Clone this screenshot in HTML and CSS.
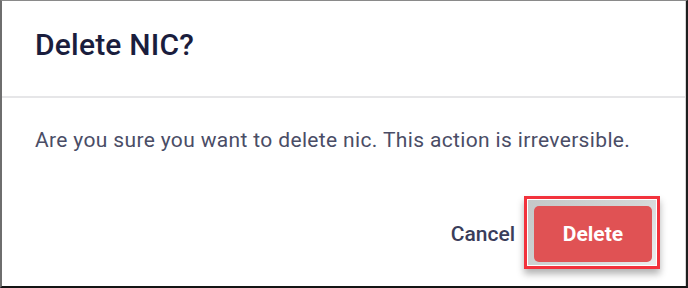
FILE: index.html
```html
<!DOCTYPE html>
<html>
<head>
<meta charset="utf-8">
<link rel="stylesheet" href="styles.css">
</head>
<body>
<div class="frame">
  <div class="dialog">
    <div class="header">
      <h2 class="title">Delete NIC?</h2>
    </div>
    <div class="content">
      <p class="message">Are you sure you want to delete nic. This action is irreversible.</p>
    </div>
    <div class="actions">
      <button class="btn-cancel">Cancel</button>
      <div class="highlight">
        <div class="focus">
          <button class="btn-delete">Delete</button>
        </div>
      </div>
    </div>
  </div>
</div>
</body>
</html>
```
FILE: styles.css
```css
html, body {
  margin: 0;
  padding: 0;
  background: #ffffff;
}
.frame {
  width: 688px;
  height: 288px;
  box-sizing: border-box;
  border-top: 1px solid #8a8a8a;
  border-left: 2px solid #6e6e6e;
  border-right: 2px solid #1e1e1e;
  border-bottom: 2px solid #141414;
  background: #ffffff;
  overflow: hidden;
}
.dialog {
  height: 100%;
  box-sizing: border-box;
  border-right: 1px solid #d6d6d6;
  display: flex;
  flex-direction: column;
  font-family: Roboto, "Liberation Sans", sans-serif;
}
.header {
  height: 97px;
  box-sizing: border-box;
  border-bottom: 2px solid #e6e6e8;
  padding: 27px 0 0 33px;
}
.title {
  margin: 0;
  font-size: 30px;
  line-height: 34px;
  font-weight: 500;
  letter-spacing: 0.2px;
  color: #1a1d3d;
}
.content {
  padding: 30px 0 0 33px;
}
.message {
  margin: 0;
  font-size: 21px;
  line-height: 24px;
  font-weight: 400;
  letter-spacing: 0.35px;
  color: #4a4d66;
}
.actions {
  display: flex;
  justify-content: flex-end;
  align-items: center;
  gap: 9px;
  padding: 44px 25px 0 0;
}
.btn-cancel {
  border: none;
  background: none;
  padding: 0;
  font-family: inherit;
  font-size: 21px;
  font-weight: 500;
  color: #3a3d5a;
  margin-top: 2px;
}
.highlight {
  border: 3px solid #f2323c;
  padding: 1px;
  background: #ffffff;
  box-shadow: 0 5px 7px rgba(0, 0, 0, 0.3);
}
.focus {
  padding: 6px 4px 3px 6px;
  background: linear-gradient(135deg, #c4c8c8 0%, #d4d7d7 60%, #eceeee 100%);
}
.btn-delete {
  display: block;
  width: 118px;
  height: 56px;
  border: none;
  border-radius: 5px;
  background: #e05254;
  color: #ffffff;
  font-family: inherit;
  font-size: 21px;
  font-weight: 700;
  padding: 0;
}
```
